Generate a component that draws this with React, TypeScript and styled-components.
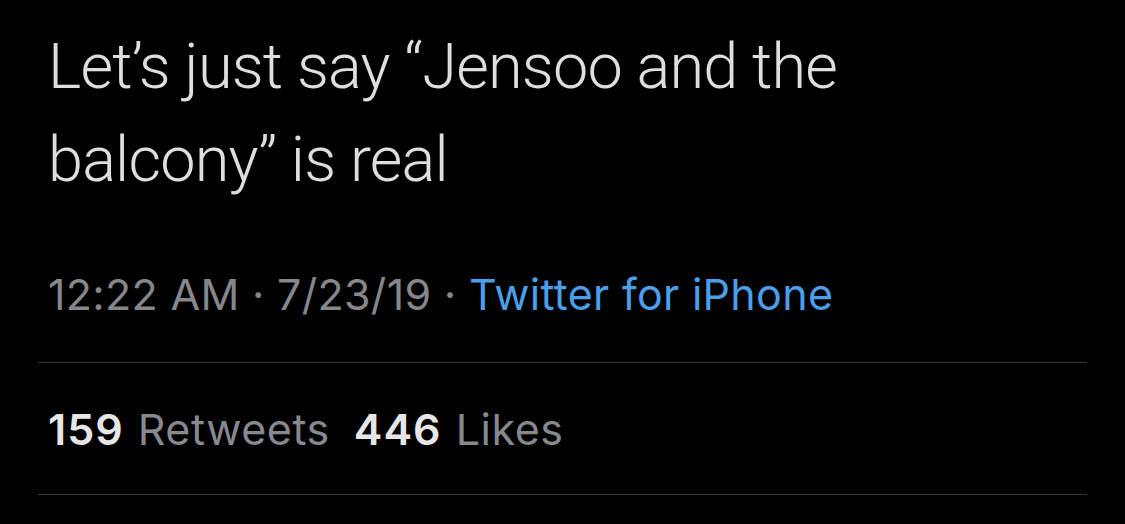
import React from "react";
import styled, { createGlobalStyle } from "styled-components";

const Global = createGlobalStyle`
  html, body { margin: 0; padding: 0; background: #000; }
  body { font-family: Inter, "Noto Sans", sans-serif; -webkit-font-smoothing: antialiased; }
`;

const Page = styled.div`
  width: 1125px;
  height: 524px;
  background: #000;
  padding: 0 38px;
  box-sizing: border-box;
  display: flex;
  flex-direction: column;
  overflow: hidden;
`;

const TweetText = styled.p`
  margin: 0;
  padding: 20px 10px 0;
  font-family: Roboto, "Noto Sans", sans-serif;
  font-size: 63px;
  font-weight: 300;
  line-height: 93px;
  letter-spacing: -0.8px;
  color: #dedede;
`;

const Meta = styled.div`
  margin-top: 63px;
  padding: 0 10px;
  height: 93px;
  font-size: 43px;
  font-weight: 400;
  line-height: 50px;
  color: #86878b;
  letter-spacing: 0.3px;
`;

const Source = styled.span`
  color: #4a9fe8;
`;

const Divider = styled.hr`
  margin: 0;
  border: none;
  height: 1px;
  flex: none;
  background: #38383a;
`;

const Stats = styled.div`
  display: flex;
  align-items: center;
  gap: 24px;
  height: 131px;
  flex: none;
  padding: 0 10px;
  font-size: 43px;
  letter-spacing: 0.55px;
`;

const Stat = styled.span`
  color: #86898e;
  font-weight: 400;
`;

const Count = styled.b`
  color: #e6e6e6;
  font-weight: 600;
  letter-spacing: 1px;
  margin-right: 14px;
`;

export default function App() {
  return (
    <>
      <Global />
      <Page>
        <TweetText>
          Let’s just say “Jensoo and the
          <br />
          balcony” is real
        </TweetText>
        <Meta>
          12:22 AM · 7/23/19 · <Source>Twitter for iPhone</Source>
        </Meta>
        <Divider />
        <Stats>
          <Stat>
            <Count>159</Count>Retweets
          </Stat>
          <Stat>
            <Count>446</Count>Likes
          </Stat>
        </Stats>
        <Divider />
      </Page>
    </>
  );
}
